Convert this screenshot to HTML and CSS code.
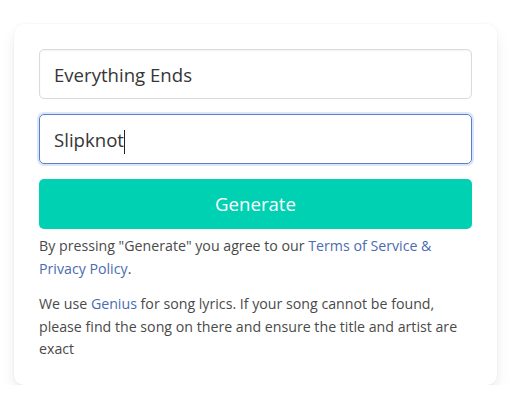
FILE: index.html
```html
<!DOCTYPE html>
<html lang="en">
<head>
    <meta charset="UTF-8">
    <meta name="viewport" content="width=device-width, initial-scale=1.0">
    <title>Lyrics</title>
    <link rel="stylesheet" href="styles.css">
</head>
<body>
    <div class="box">
        <div class="field">Everything Ends</div>
        <div class="field focused">Slipknot<span class="caret"></span></div>
        <div class="button">Generate</div>
        <p class="help">By pressing "Generate" you agree to our <a href="#">Terms of Service &amp; Privacy Policy</a>.</p>
        <p class="help">We use <a href="#">Genius</a> for song lyrics. If your song cannot be found, please find the song on there and ensure the title and artist are exact</p>
    </div>
</body>
</html>
```

FILE: styles.css
```css
body {
    margin: 0;
    background-color: white;
    font-family: "Open Sans", "Noto Sans", sans-serif;
    color: #4a4a4a;
}

.box {
    width: 433px;
    margin: 24px 0 0 14px;
    padding: 25px 25px 24px 25px;
    background-color: white;
    border-radius: 10px;
    box-shadow: 0 8px 16px -2px rgba(10, 10, 10, 0.1), 0 0 0 1px rgba(10, 10, 10, 0.02);
}

.field {
    height: 50px;
    box-sizing: border-box;
    border: 1px solid #dbdbdb;
    border-radius: 5px;
    padding: 2px 14px 0 14px;
    font-size: 18.6px;
    line-height: 46px;
    color: #363636;
    margin-bottom: 15px;
    box-shadow: inset 0 1px 2px rgba(10, 10, 10, 0.05);
}

.focused {
    border-color: #5a7fc8;
    box-shadow: 0 0 0 2px rgba(50, 115, 220, 0.18);
}

.caret {
    display: inline-block;
    width: 1px;
    height: 24px;
    background-color: #222;
    vertical-align: middle;
}

.button {
    height: 50px;
    border-radius: 5px;
    background-color: #00d1b2;
    color: white;
    font-size: 18.6px;
    line-height: 50px;
    text-align: center;
}

.help {
    font-size: 14.2px;
    line-height: 22.5px;
    margin: 6px 0 0 0;
}

.help + .help {
    margin-top: 13px;
}

a {
    color: #4a6cb0;
    text-decoration: none;
}
```
